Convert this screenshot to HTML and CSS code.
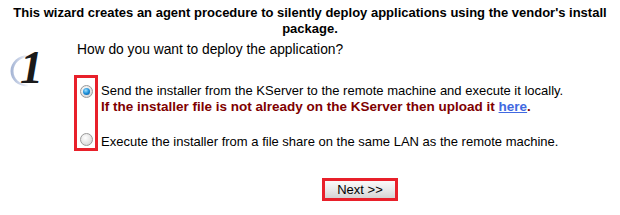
FILE: index.html
```html
<html>
<head>
	<meta charset="utf-8" />
	<link rel="stylesheet" href="styles.css">
</head>
<body>
<div class="wizard">
	<div class="intro">This wizard creates an agent procedure to silently deploy applications using the vendor's install package.</div>

	<div class="step">
		<div class="step-icon">
			<svg width="40" height="40" viewBox="0 0 40 40">
				<defs>
					<linearGradient id="ring" x1="0" y1="0" x2="1" y2="0">
						<stop offset="0" stop-color="#a3b3d3"/>
						<stop offset="0.6" stop-color="#d3dbec"/>
						<stop offset="1" stop-color="#ffffff"/>
					</linearGradient>
				</defs>
				<path d="M20 1 C9 1 1.5 8.5 1.5 17 C1.5 26 9 32.5 19 32.5 L19 30.5 C11 30.5 4.5 25 4.5 17 C4.5 9.5 11 3 20 3 Z" fill="url(#ring)"/>
			</svg>
			<span class="step-num">1</span>
		</div>

		<div class="step-content">
			<div class="question">How do you want to deploy the application?</div>

			<div class="options">
				<div class="highlight"></div>
				<div class="radio-cell first"><span class="radio checked"></span></div>
				<div class="option-text first">
					Send the installer from the KServer to the remote machine and execute it locally.<br>
					<span class="warn">If the installer file is not already on the KServer then upload it <a href="#">here</a>.</span>
				</div>
				<div class="radio-cell second"><span class="radio"></span></div>
				<div class="option-text second">Execute the installer from a file share on the same LAN as the remote machine.</div>
			</div>
		</div>
	</div>

	<div class="actions">
		<span class="btn-frame"><button class="btn">Next &gt;&gt;</button></span>
	</div>
</div>
</body>
</html>
```

FILE: styles.css
```css
body {
	margin: 0;
	background: #fff;
	font-family: "Liberation Sans", Arial, sans-serif;
	font-size: 13px;
	color: #000;
}
.intro {
	font-weight: bold;
	font-size: 13px;
	line-height: 16px;
	text-align: center;
	padding: 5px 4px 0 4px;
}
.step {
	display: flex;
	margin-top: 5px;
}
.step-icon {
	position: relative;
	width: 74px;
	flex: none;
	height: 60px;
}
.step-icon svg {
	position: absolute;
	left: 9px;
	top: 12px;
}
.step-num {
	position: absolute;
	left: 20px;
	top: 1px;
	font-family: "Liberation Serif", "Times New Roman", serif;
	font-style: italic;
	font-weight: bold;
	font-size: 46px;
	line-height: 50px;
	color: #1a1a1a;
}
.step-content {
	flex: 1;
}
.question {
	font-size: 13.8px;
	line-height: 16px;
	padding-left: 3px;
}
.options {
	display: grid;
	grid-template-columns: 24px 1fr;
	margin-top: 17px;
}
.highlight {
	grid-column: 1;
	grid-row: 1 / 3;
	border: 3px solid #e8202a;
}
.radio-cell {
	grid-column: 1;
	display: flex;
	justify-content: center;
}
.radio-cell.first { grid-row: 1; padding-top: 10px; }
.radio-cell.second { grid-row: 2; padding-top: 18px; }
.option-text {
	grid-column: 2;
	line-height: 16px;
	padding-left: 3px;
}
.option-text.first { grid-row: 1; padding-top: 8px; }
.option-text.second { grid-row: 2; padding-top: 19px; padding-bottom: 1px; }
.radio {
	display: inline-block;
	box-sizing: border-box;
	width: 13px;
	height: 13px;
	border-radius: 50%;
	border: 1px solid #9a9a9a;
	background: radial-gradient(circle at 40% 35%, #ffffff 0%, #e4e4e4 55%, #c8c8c8 100%);
	position: relative;
}
.radio.checked::after {
	content: "";
	position: absolute;
	left: 2px;
	top: 2px;
	width: 7px;
	height: 7px;
	border-radius: 50%;
	background: radial-gradient(circle at 40% 35%, #9fe0ff 0%, #1c8fd8 50%, #0b4f92 100%);
}
.warn {
	font-weight: bold;
	font-size: 13.5px;
	color: #800000;
}
.warn a {
	color: #4169e1;
	text-decoration: underline;
}
.actions {
	margin-top: 27px;
	padding-left: 322px;
}
.btn-frame {
	display: inline-block;
	border: 3px solid #e8202a;
}
.btn {
	display: block;
	width: 70px;
	height: 17px;
	margin: 0;
	padding: 0;
	border: none;
	background: linear-gradient(#fafafa, #e6e6e6 60%, #d4d4d4);
	font-family: "Liberation Sans", Arial, sans-serif;
	font-size: 13px;
	color: #000;
}
```
